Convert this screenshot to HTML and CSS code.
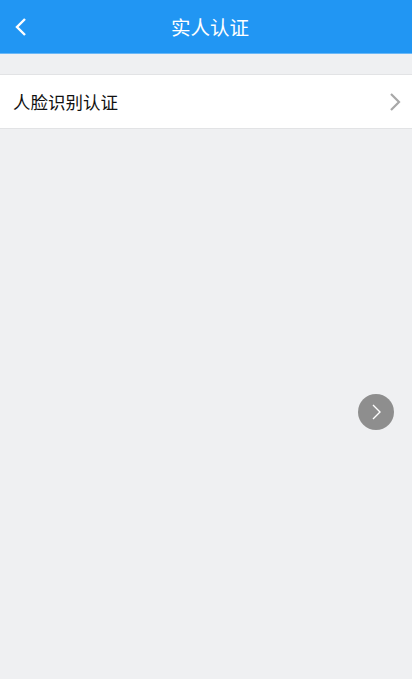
FILE: index.html
```html
<!DOCTYPE html>
<html lang="zh">
  <head>
    <meta charset="UTF-8" />
    <title>实人认证</title>
    <link rel="stylesheet" href="styles.css">
  </head>
  <body>
    <div class="header">
      <button class="back-btn">
        <svg width="14" height="20" viewBox="0 0 14 20">
          <path d="M11 2 L3 10 L11 18" fill="none" stroke="#fff" stroke-width="2.4" />
        </svg>
      </button>
      <h1>实人认证</h1>
    </div>
    <div class="list">
      <div class="list-row">
        <span>人脸识别认证</span>
        <svg width="12" height="20" viewBox="0 0 12 20">
          <path d="M2 2 L10 10 L2 18" fill="none" stroke="#a8a8a8" stroke-width="2.2" />
        </svg>
      </div>
    </div>
    <div class="float-btn">
      <svg width="12" height="18" viewBox="0 0 12 18">
        <path d="M3 2 L10 9 L3 16" fill="none" stroke="#fff" stroke-width="1.4" />
      </svg>
    </div>
  </body>
</html>
```

FILE: styles.css
```css
body {
  margin: 0;
  background: #eff0f2;
  min-height: 100vh;
  font-family: "Noto Sans CJK SC", "Noto Sans", sans-serif;
}
.header {
  height: 53px;
  background: #2196f3;
  border-bottom: 1px solid #6ab8f7;
  display: flex;
  align-items: center;
  justify-content: center;
  position: relative;
}
.header h1 {
  margin: 0 0 0 8px;
  font-size: 19.5px;
  font-weight: 400;
  color: #fff;
}
.back-btn {
  position: absolute;
  left: 10px;
  top: 17px;
  border: none;
  background: none;
  padding: 0 4px;
  display: flex;
}
.list {
  margin-top: 20px;
  background: #fff;
  border-top: 1px solid #e2e3e5;
  border-bottom: 1px solid #e2e3e5;
}
.list-row {
  height: 53px;
  display: flex;
  align-items: center;
  justify-content: space-between;
  padding: 0 11px 0 13px;
  font-size: 17.5px;
  color: #111;
}
.float-btn {
  position: absolute;
  left: 358px;
  top: 394px;
  width: 36px;
  height: 36px;
  border-radius: 50%;
  background: #8e8e8e;
  display: flex;
  align-items: center;
  justify-content: center;
}
```
